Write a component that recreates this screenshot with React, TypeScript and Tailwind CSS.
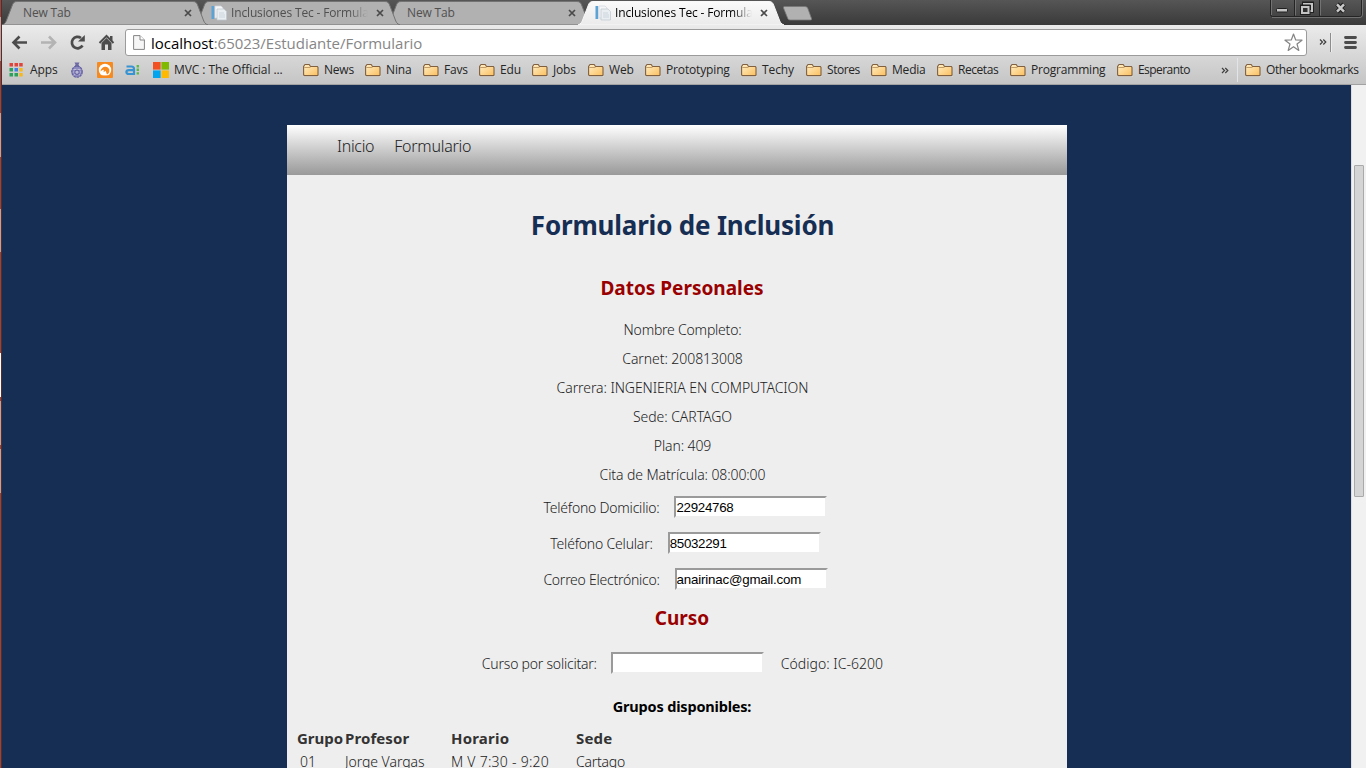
import type { ReactNode } from "react";

const folders = [
  { label: "News", width: "w-[62px]", track: "tracking-[-0.2px]" },
  { label: "Nina", width: "w-[58px]", track: "tracking-[-0.1px]" },
  { label: "Favs", width: "w-[56px]", track: "tracking-[-0.2px]" },
  { label: "Edu", width: "w-[53px]", track: "tracking-[-0.1px]" },
  { label: "Jobs", width: "w-[56px]", track: "tracking-[-0.2px]" },
  { label: "Web", width: "w-[57px]", track: "tracking-[-0.1px]" },
  { label: "Prototyping", width: "w-[96px]", track: "tracking-[-0.15px]" },
  { label: "Techy", width: "w-[65px]", track: "tracking-[-0.1px]" },
  { label: "Stores", width: "w-[65px]", track: "tracking-[-0.45px]" },
  { label: "Media", width: "w-[66px]", track: "tracking-[-0.2px]" },
  { label: "Recetas", width: "w-[73px]", track: "tracking-[-0.45px]" },
  { label: "Programming", width: "w-[107px]", track: "tracking-[-0.2px]" },
  { label: "Esperanto", width: "w-[104px]", track: "tracking-[-0.55px]" },
];

const personal = [
  { text: "Nombre Completo:", track: "tracking-[-0.22px]" },
  { text: "Carnet: 200813008", track: "tracking-[-0.06px]" },
  { text: "Carrera: INGENIERIA EN COMPUTACION", track: "tracking-[-0.07px]" },
  { text: "Sede: CARTAGO", track: "tracking-[-0.05px]" },
  { text: "Plan: 409", track: "tracking-[-0.12px]" },
  { text: "Cita de Matrícula: 08:00:00", track: "tracking-[-0.1px]" },
];

function FolderIcon() {
  return (
    <svg width="16" height="15" viewBox="0 0 16 15" className="shrink-0">
      <defs>
        <linearGradient id="folder" x1="0" y1="0" x2="1" y2="1">
          <stop offset="0" stopColor="#fff0c8" />
          <stop offset="1" stopColor="#fbbf5e" />
        </linearGradient>
      </defs>
      <path d="M.5 13.5h15" stroke="#e2e2e2" />
      <path d="M.6 11.6V3.4L2 1.5h4.2l1.3 2h6.9l.6 1v7.5l-.6.6H1.200z" fill="url(#folder)" stroke="#80603f" strokeWidth="1.1" />
      <path d="M1.3 4.5h5.6l.8-.5" stroke="#b48a55" strokeWidth=".8" fill="none" />
    </svg>
  );
}

function DocIcon() {
  return (
    <svg width="16" height="16" viewBox="0 0 16 16" className="shrink-0">
      <path d="M.5 1h2.7v13H.5z" fill="#5ba3d4" />
      <path d="M4 1h6l2 2v10H4z" fill="#f4f6f8" stroke="#cfd6dc" strokeWidth=".7" />
      <path d="M6 4h7l2.5 2.5V15H6z" fill="#e9eef2" stroke="#bfc7ce" strokeWidth=".7" />
      <path d="M8 8h5M8 10h6M8 12h6" stroke="#c3ced8" strokeWidth=".8" />
    </svg>
  );
}

function CloseX() {
  return (
    <svg width="8" height="8" viewBox="0 0 8 8">
      <path d="M1 1l6 6M7 1L1 7" stroke="#4a4a4a" strokeWidth="1.7" />
    </svg>
  );
}

function Tab({ title, icon, active, z }: { title: string; icon?: boolean; active?: boolean; z: string }) {
  return (
    <div className={`relative h-[25px] w-[192px] shrink-0 ${z}`}>
      <svg width="207" height="25" viewBox="0 0 207 25" className="absolute left-0 top-0">
        <defs>
          <linearGradient id="activeTab" x1="0" y1="0" x2="0" y2="1">
            <stop offset="0" stopColor="#fafafa" />
            <stop offset="1" stopColor="#ebebeb" />
          </linearGradient>
        </defs>
        <path
          d="M0 25C3 24 4 22 5 19L10 6C11 3 12 1.5 15 1.5H191C194 1.5 195 3 196 6L201 19C202 22 203 24 206 25Z"
          fill={active ? "url(#activeTab)" : "#b1b1b1"}
          stroke={active ? "#f8f8f8" : "#737373"}
        />
      </svg>
      <div className={`relative flex h-[25px] items-center ${icon ? "pl-[17px]" : "pl-[21px]"}`}>
        {icon && <span className="mr-[4px] mt-px"><DocIcon /></span>}
        <span
          className={`h-[18px] overflow-hidden whitespace-nowrap text-[12px] leading-[18px] tracking-[-0.15px] ${
            icon ? "w-[137px] [mask-image:linear-gradient(to_right,black_86%,transparent)]" : "w-[140px]"
          } ${active ? "text-black" : "text-[#505050]"}`}
        >
          {title}
        </span>
        <span className="ml-auto mr-[2px]"><CloseX /></span>
      </div>
    </div>
  );
}

function WindowButtons() {
  return (
    <svg width="96" height="18" viewBox="0 0 96 18" className="ml-auto mr-[2px]">
      <path d="M2.5 0V14.5Q2.5 16.5 4.5 16.5H91.5Q93.5 16.5 93.5 14.5V0M26.5 0V16M51.5 0V16" fill="none" stroke="#242424" />
      <path d="M3.5 0V15M27.5 0V15.5M52.5 0V15.5M94.5 0V15Q94 17.500 92 17.500H4" fill="none" stroke="#7b7b7b" strokeWidth=".8" />
      <rect x="8.500" y="8.500" width="11" height="3.500" rx=".8" fill="#c4c4c4" stroke="#202020" />
      <path d="M36 3.500H44V11H36Z" fill="none" stroke="#202020" strokeWidth="4" />
      <path d="M36 4H44V11H36Z" fill="none" stroke="#c4c4c4" strokeWidth="2" />
      <path d="M34 6.500H40.500V13H34Z" fill="#303030" stroke="#202020" strokeWidth="4" />
      <path d="M34 7H40.500V13H34Z" fill="#303030" stroke="#c4c4c4" strokeWidth="2" />
      <path d="M69 4L76 12M76 4L69 12" stroke="#202020" strokeWidth="4.500" />
      <path d="M69 4.300L76 11.700M76 4.300L69 11.700" stroke="#c9c9c9" strokeWidth="2.500" />
    </svg>
  );
}

function Toolbar() {
  return (
    <div className="flex h-[34px] items-center">
      <svg width="123" height="34" viewBox="0 0 123 34" className="shrink-0">
        <path d="M25 17.500H12M17.500 11.500L11.500 17.500L17.500 23.500" fill="none" stroke="#4c4c4c" strokeWidth="2.600" />
        <path d="M39 17.500H52M47 11.500L53 17.500L47 23.500" fill="none" stroke="#b3b3b3" strokeWidth="2.600" />
        <path d="M80.500 20.500A5.700 5.700 0 1 1 79 13" fill="none" stroke="#4c4c4c" strokeWidth="2.700" />
        <path d="M82.800 10V16.500H76Z" fill="#4c4c4c" />
        <path d="M97.500 18L104.500 11L111.500 18" fill="none" stroke="#4c4c4c" strokeWidth="2" />
        <path d="M108 11H110.500V16L108 14ZM99.500 18L104.500 13L109.500 18V25H106V19.500H103V25H99.500Z" fill="#4c4c4c" />
      </svg>
      <div className="mt-px flex h-[27px] w-[1182px] shrink-0 items-center rounded-[3px] border border-[#9b9b9b] bg-white">
        <svg width="12" height="15" viewBox="0 0 12 15" className="ml-[7px] shrink-0">
          <path d="M.6.6H7L11.400 5V14.400H.6Z" fill="#f6f6f6" stroke="#858585" />
          <path d="M7 .6V5H11.400" fill="#fff" stroke="#858585" />
        </svg>
        <span className="ml-[6px] whitespace-nowrap text-[15px] leading-[22px] tracking-[-0.02px] text-[#868686]">
          <span className="text-black">localhost</span>:65023/Estudiante/Formulario
        </span>
        <svg width="19" height="19" viewBox="0 0 19 19" className="ml-auto mr-[3px]">
          <path d="M9.500 1L11.700 7L18 7.200L13 11L14.800 17.400L9.500 13.700L4.200 17.400L6 11L1 7.200L7.300 7Z" fill="#fff" stroke="#858585" strokeWidth="1.200" strokeLinejoin="round" />
        </svg>
      </div>
      <svg width="56" height="34" viewBox="0 0 56 34" className="shrink-0">
        <path d="M13 14.500L15.500 17L13 19.500M16.300 14.500L18.800 17L16.300 19.500" fill="none" stroke="#3f3f3f" strokeWidth="1.200" />
        <path d="M23.500 8V27" stroke="#8d8d8d" />
        <path d="M24.500 8V27" stroke="#eeeeee" />
        <path d="M38.500 12.500H48.500M38.500 17.500H48.500M38.500 22.500H48.500" stroke="#4c4c4c" strokeWidth="2.800" strokeLinecap="round" />
      </svg>
    </div>
  );
}

function Bookmarks() {
  return (
    <div className="flex h-[22px] items-center whitespace-nowrap text-[12px] leading-[18px] text-[#252525]">
      <svg width="14" height="14" viewBox="0 0 14 14" className="ml-[7px] shrink-0">
        <path d="M.5 0h3.500v3.500H.5zM5.500 0H9v3.500H5.500zM10.200 0h3.500v3.500h-3.500z" fill="#e0443b" />
        <path d="M.5 5h3.500v3.500H.5z" fill="#2ba25c" />
        <path d="M5.500 5H9v3.500H5.500z" fill="#3f80e8" />
        <path d="M10.200 5h3.500v3.500h-3.500z" fill="#f5b91f" />
        <path d="M.5 10h3.500v3.500H.5zM5.500 10H9v3.500H5.500z" fill="#2ba25c" />
        <path d="M10.200 10h3.500v3.500h-3.500z" fill="#f5b91f" />
      </svg>
      <span className="ml-[7px] w-[41px] tracking-[-0.1px]">Apps</span>
      <svg width="14" height="16" viewBox="0 0 14 16" className="ml-[-1px] mr-[13px] shrink-0">
        <path d="M4.500 .5h5l-1 2 1 2.500h-5l1-2.500z" fill="#6d6aa6" />
        <ellipse cx="7" cy="9.700" rx="5.200" ry="5.500" fill="#8f8cc0" stroke="#6461a2" strokeWidth="1.300" strokeDasharray="2.500 .6" />
        <path d="M3.500 7.500H10.500M3 10H5M9 10H11M4 13L5.500 12M10 13L8.500 12" stroke="#c4c2dd" strokeWidth=".9" />
        <circle cx="7" cy="10.200" r="2.200" fill="#b9b7d6" stroke="#5a5799" />
      </svg>
      <svg width="16" height="16" viewBox="0 0 16 16" className="shrink-0">
        <rect width="16" height="16" rx="1" fill="#f78a1e" />
        <circle cx="8" cy="8" r="6.200" fill="#fff" />
        <path d="M3.500 9.500C4 6.300 6 4.800 8.200 4.800C10.800 4.800 12.600 6.800 12.400 9C12.300 10.800 11.300 12 10 12.500L8.600 8.800L6.600 10.200L6.800 7.800Q5 8 3.500 9.500Z" fill="#f78a1e" />
        <path d="M5 13.400H11V16H5Z" fill="#f78a1e" />
      </svg>
      <svg width="15" height="16" viewBox="0 0 15 16" className="ml-[12px] shrink-0">
        <path d="M1.500 4.500H6.500Q9 4.500 9 7V12H4Q1.400 12 1.400 10Q1.400 8.200 4 8.200H8.500" fill="none" stroke="#3793d2" strokeWidth="2.200" />
        <path d="M12.800 3V13" stroke="#58b947" strokeWidth="2.300" strokeDasharray="2.400 1.200" />
      </svg>
      <svg width="16" height="16" viewBox="0 0 16 16" className="ml-[13px] shrink-0">
        <path d="M0 0h7.600v7.600H0z" fill="#f25022" />
        <path d="M8.400 0H16v7.600H8.400z" fill="#7fba00" />
        <path d="M0 8.400h7.600V16H0z" fill="#00a4ef" />
        <path d="M8.400 8.400H16V16H8.400z" fill="#ffb900" />
      </svg>
      <span className="ml-[5px] w-[129px] tracking-[-0.07px]">MVC : The Official ...</span>
      <div className="flex">
        {folders.map((f) => (
          <span key={f.label} className={`flex shrink-0 items-center gap-[5px] ${f.width} ${f.track}`}>
            <FolderIcon />
            {f.label}
          </span>
        ))}
      </div>
      <svg width="8" height="7" viewBox="0 0 8 7" className="shrink-0">
        <path d="M1 1L3.500 3.500L1 6M4.300 1L6.800 3.500L4.300 6" fill="none" stroke="#3f3f3f" strokeWidth="1.200" />
      </svg>
      <span className="ml-[8px] mr-[7px] h-[24px] w-px shrink-0 bg-[#e2e4e8]" />
      <FolderIcon />
      <span className="ml-[5px] tracking-[-0.4px]">Other bookmarks</span>
    </div>
  );
}

function TextBox({ value, track = "" }: { value: string; track?: string }) {
  return (
    <input
      defaultValue={value}
      className={`h-[22px] w-[153px] border-2 border-b-[#eeeeee] border-l-[#9a9a9a] border-r-[#eeeeee] border-t-[#9a9a9a] bg-white font-['Liberation_Sans',sans-serif] text-[13.33px] text-black outline-none ${track}`}
    />
  );
}

function Field({ label, value, track, valueTrack }: { label: string; value: string; track: string; valueTrack: string }) {
  return (
    <div className="flex h-[36px] items-center justify-center gap-[15px] pl-[7px]">
      <span className={track}>{label}</span>
      <TextBox value={value} track={valueTrack} />
    </div>
  );
}

function Heading({ children }: { children: ReactNode }) {
  return <h2 className="text-center text-[19px] font-bold leading-[28px] text-[#990000]">{children}</h2>;
}

export default function App() {
  return (
    <div className="flex h-[768px] w-[1366px] overflow-hidden bg-[#172e54]">
      <div className="flex w-[2px] shrink-0 flex-col border-r border-[#5c2a28] bg-[#8a4a41]">
        <span className="mt-[17px] h-[44px] bg-[#b9a5a1]" />
        <span className="mt-[52px] h-[44px] bg-[#b9a5a1]" />
        <span className="mt-[52px] h-[43px] bg-[#b9a5a1]" />
        <span className="mt-[101px] h-[44px] bg-white" />
        <span className="mt-[4px] h-[44px] bg-[#b9a5a1]" />
        <span className="mt-[4px] h-[44px] bg-[#b9a5a1]" />
      </div>
      <div className="flex w-[1364px] flex-col">
        <header className="font-['Open_Sans',sans-serif]">
          <div className="flex h-[25px] bg-gradient-to-b from-[#565656] to-[#3a3a3a]">
            <Tab title="New Tab" z="z-30" />
            <Tab title="Inclusiones Tec - Formulario" icon z="z-20" />
            <Tab title="New Tab" z="z-10" />
            <Tab title="Inclusiones Tec - Formulario" icon active z="z-40" />
            <svg width="32" height="25" viewBox="0 0 32 25" className="ml-[11px] shrink-0">
              <path d="M3.500 6.500H24Q26 6.500 26.700 8L30.500 18.500Q31 20 29.500 20H9Q7.500 20 6.800 18.500L2.500 8Q2 6.500 3.500 6.500Z" fill="#b1b1b1" stroke="#777" strokeWidth=".8" />
            </svg>
            <WindowButtons />
          </div>
          <div className="h-[60px] border-b border-[#a2a2a2] bg-gradient-to-b from-[#ebebeb] to-[#c5c5c5]">
            <Toolbar />
            <Bookmarks />
          </div>
        </header>
        <div className="flex h-[683px]">
          <div className="w-[1349px] shrink-0 overflow-hidden pl-[285px] pt-[40px]">
            <main className="h-[643px] w-[780px] bg-[#eeeeee] font-['Noto_Sans',sans-serif] text-[14px] font-light text-[#222222]">
              <nav className="flex h-[50px] gap-[20px] bg-gradient-to-b from-white to-[#999999] pl-[50px] pt-[9px] text-[16px] leading-[24px]">
                <a className="tracking-[-0.3px]">Inicio</a>
                <a className="tracking-[-0.25px]">Formulario</a>
              </nav>
              <div className="pl-[10px]">
                <h1 className="pl-px pt-[32px] text-center text-[26px] font-bold leading-[36px] tracking-[-0.2px] text-[#172e54]">
                  Formulario de Inclusión
                </h1>
                <div className="pt-[31px]"><Heading>Datos Personales</Heading></div>
                <div className="pl-px pt-[13px] text-center leading-[29px]">
                  {personal.map((p) => (
                    <p key={p.text} className={p.track}>{p.text}</p>
                  ))}
                </div>
                <Field label="Teléfono Domicilio:" value="22924768" track="tracking-[-0.22px]" valueTrack="tracking-[-0.3px]" />
                <Field label="Teléfono Celular:" value="85032291" track="tracking-[-0.2px]" valueTrack="tracking-[-0.3px]" />
                <Field label="Correo Electrónico:" value="anairinac@gmail.com" track="tracking-[-0.25px]" valueTrack="tracking-[-0.2px]" />
                <div className="pt-[7px]"><Heading>Curso</Heading></div>
                <div className="mt-[13px] flex h-[36px] items-center justify-center pl-px">
                  <span className="mr-[14px] tracking-[-0.22px]">Curso por solicitar:</span>
                  <TextBox value="" />
                  <span className="ml-[17px] tracking-[0.03px]">Código: IC-6200</span>
                </div>
                <h3 className="mt-[14px] text-center text-[14.5px] font-bold leading-[22px] tracking-[-0.18px] text-black">
                  Grupos disponibles:
                </h3>
                <div className="mt-[9px] grid grid-cols-[48px_106px_125px_1fr] text-[15px] font-bold leading-[24px] text-[#333333]">
                  <span>Grupo</span>
                  <span className="tracking-[0.1px]">Profesor</span>
                  <span className="tracking-[0.2px]">Horario</span>
                  <span className="tracking-[0.2px]">Sede</span>
                </div>
                <div className="grid grid-cols-[48px_106px_125px_1fr] leading-[24px]">
                  <span className="pl-[3px]">01</span>
                  <span className="tracking-[-0.05px]">Jorge Vargas</span>
                  <span className="tracking-[0.26px]">M V 7:30 - 9:20</span>
                  <span className="tracking-[-0.25px]">Cartago</span>
                </div>
              </div>
            </main>
          </div>
          <div className="w-[15px] border-l border-[#dddddd] bg-[#f1f1f1] pl-[2px] pt-[80px]">
            <div className="h-[332px] w-[10px] rounded-[1px] border border-[#aaaaaa] bg-[#d5d5d5]" />
          </div>
        </div>
      </div>
    </div>
  );
}
